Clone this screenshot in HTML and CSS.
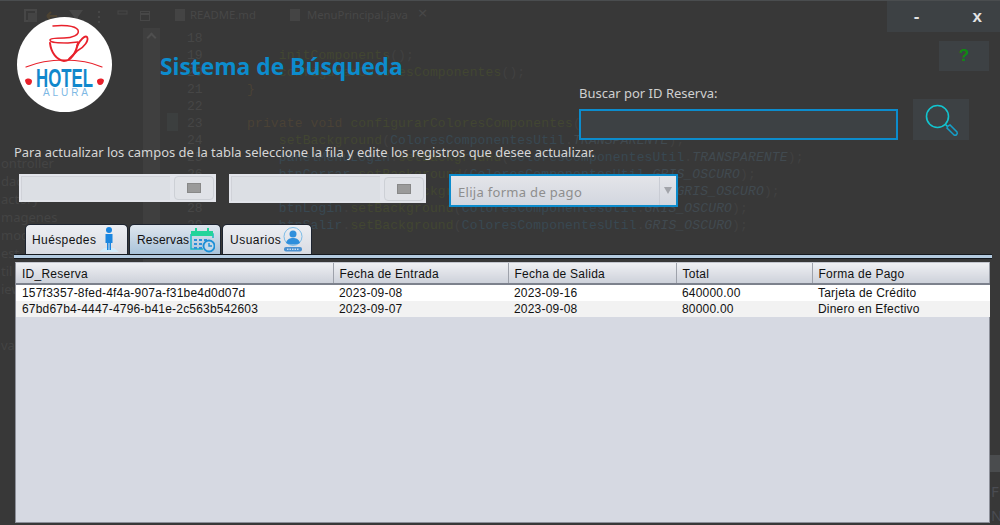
FILE: index.html
```html
<!DOCTYPE html>
<html lang="en">
<head>
    <meta charset="UTF-8">
    <title>Sistema de Búsqueda</title>
    <link rel="stylesheet" href="styles.css">
</head>
<body>
    <div class="window">
        <!-- the IDE that shows through the translucent window -->
        <div class="backdrop">
            <div class="ide-bar">
                <svg class="ide-icons" width="160" height="27" viewBox="0 0 160 27">
                    <rect x="25" y="9" width="11" height="11" fill="none" stroke="#474747" stroke-width="2"/>
                    <rect x="28" y="12" width="9" height="9" fill="#444"/>
                    <path d="M47 15h10M47 15l4-4M47 15l4 4" fill="none" stroke="#4d4332" stroke-width="2"/>
                    <path d="M69 9h14l-5 7v6h-4v-6z" fill="#474747"/>
                    <path d="M99 10v2M99 15v2M99 20v2" stroke="#474747" stroke-width="2"/>
                    <rect x="118" y="10" width="9" height="3" fill="none" stroke="#474747"/>
                    <rect x="140.500" y="10.500" width="9" height="9" fill="none" stroke="#474747"/>
                    <path d="M140 13h10" stroke="#474747" stroke-width="2"/>
                </svg>
                <span class="ide-file"></span>
                <span class="ide-tab">README.md</span>
                <span class="ide-file"></span>
                <span class="ide-tab ide-tab-open">MenuPrincipal.java <span class="ide-close">×</span></span>
            </div>
            <div class="ide-tree">
                <p>ontroller</p><p>dao</p><p>actory</p><p>magenes</p><p>model</p><p>est</p><p>til</p><p>iew</p>
                <p class="ide-tree-last">va</p>
            </div>
            <div class="ide-scroll"><span class="ide-scroll-up"></span></div>
            <div class="ide-gutter"></div>
            <pre class="ide-nums">18
19
20
21
22
23
24
25
26
27
28
29</pre>
            <pre class="ide-code">

    <i class="m">initComponents</i>();
    <i class="m">configurarColoresComponentes</i>();
<i class="k">}</i>

<i class="k">private void</i> <i class="m">configurarColoresComponentes</i>() {
    <i class="m">setBackground</i>(<i class="c">ColoresComponentesUtil</i>.<em>TRANSPARENTE</em>);
    <i class="c">panelMenuLogin</i>.<i class="m">setBackground</i>(<i class="c">ColoresComponentesUtil</i>.<em>TRANSPARENTE</em>);
    <i class="c">btnCerrar</i>.<i class="m">setBackground</i>(<i class="c">ColoresComponentesUtil</i>.<em>GRIS_OSCURO</em>);
    <i class="c">btnRegistrar</i>.<i class="m">setBackground</i>(<i class="c">ColoresComponentesUtil</i>.<em>GRIS_OSCURO</em>);
    <i class="c">btnLogin</i>.<i class="m">setBackground</i>(<i class="c">ColoresComponentesUtil</i>.<em>GRIS_OSCURO</em>);
    <i class="c">btnSalir</i>.<i class="m">setBackground</i>(<i class="c">ColoresComponentesUtil</i>.<em>GRIS_OSCURO</em>);</pre>
            <div class="ide-edge"></div>
            <div class="ide-side"><p>F</p><p>N</p></div>
        </div>

        <div class="win-buttons">
            <span class="win-btn">-</span>
            <span class="win-btn">x</span>
        </div>

        <div class="app">
            <div class="top">
                <div class="brand">
                    <svg class="logo" width="95" height="95" viewBox="0 0 95 95">
                        <circle cx="47.500" cy="47.500" r="47.500" fill="#fff"/>
                        <g fill="none" stroke="#e8212b" stroke-linecap="round">
                            <path d="M36 9c8-1 22-1 25 4 2 5-6 8-14 8-6 0-14 0-14 2 0 3 10 3 18 3l10-1" stroke-width="1.500"/>
                            <path d="M33 26c1 10 7 17 14 18 7 0 12-8 14-18" stroke-width="2"/>
                            <path d="M60 29c3-6 8-11 10-9 2 3-2 10-10 14l-8 8" stroke-width="1.800"/>
                            <path d="M9 50c12-5 25-7 38-7s27 2 38 7" stroke-width="1.200"/>
                        </g>
                        <path d="M8 63c3-3 7-1 7 1s-1 4-3 4-4-2-4-5zM87 63c-3-3-7-1-7 1s1 4 3 4 4-2 4-5z" fill="#e8212b"/>
                        <text class="logo-hotel" x="19" y="70" textLength="57" lengthAdjust="spacingAndGlyphs">HOTEL</text>
                        <text class="logo-alura" x="26" y="79" textLength="45">ALURA</text>
                    </svg>
                    <h1 class="title">Sistema de Búsqueda</h1>
                </div>
                <div class="search">
                    <label class="search-label">Buscar por ID Reserva:</label>
                    <div class="search-input"></div>
                </div>
                <div class="side">
                    <div class="help">?</div>
                    <div class="search-btn">
                        <svg width="36" height="36" viewBox="0 0 36 36" fill="none">
                            <circle cx="14.500" cy="14.500" r="11" stroke="#12c4cf" stroke-width="1.600"/>
                            <path d="M22.500 22.500l3 3" stroke="#12c4cf" stroke-width="1.600"/>
                            <path d="M25 24l2-1 7 7c1 2-1 4-3 3l-7-7z" stroke="#159fc9" stroke-width="1.500" fill="#3d4144"/>
                        </svg>
                    </div>
                </div>
            </div>

            <p class="hint">Para actualizar los campos de la tabla seleccione la fila y edite los registros que desee actualizar.</p>

            <div class="filters">
                <div class="date-box">
                    <div class="date-field"></div>
                    <div class="date-btn"><span class="cal-glyph"></span></div>
                </div>
                <div class="date-box">
                    <div class="date-field"></div>
                    <div class="date-btn"><span class="cal-glyph"></span></div>
                </div>
                <div class="combo">
                    <span class="combo-text">Elija forma de pago</span>
                    <span class="combo-arrow"></span>
                </div>
            </div>

            <div class="tabs">
                <div class="tab">
                    <span>Huéspedes</span>
                    <svg class="tab-person" width="22" height="27" viewBox="0 0 22 27">
                        <path d="M1 26l5-4h10l5 4z" fill="#d3ecfb"/>
                        <circle cx="11" cy="4" r="3" fill="#1a86e0"/>
                        <path d="M7.500 8h7v9h-1.500v7h-1.500v-7h-1v7h-1.500v-7h-1.500z" fill="#1a86e0"/>
                    </svg>
                </div>
                <div class="tab tab-active">
                    <span>Reservas</span>
                    <svg class="tab-cal" width="25" height="26" viewBox="0 0 25 26" fill="none">
                        <path d="M1 7h22v4M1 7v15h12" stroke="#18b6c4" stroke-width="1.500"/>
                        <rect x="1" y="4" width="22" height="5" fill="#22d49a"/>
                        <path d="M6 1v5M18 1v5" stroke="#22d49a" stroke-width="2"/>
                        <path d="M4 12h3v2h-3zM9 12h3v2h-3zM14 12h3v2h-3zM4 16h3v2h-3zM9 16h3v2h-3zM4 20h3v2h-3zM9 20h3v2h-3z" fill="#2b8fd8"/>
                        <circle cx="19" cy="19" r="5.500" fill="#c5d8e8" stroke="#1c8fd6" stroke-width="1.800"/>
                        <path d="M19 16v3h3" stroke="#1c8fd6" stroke-width="1.400"/>
                    </svg>
                </div>
                <div class="tab">
                    <span>Usuarios</span>
                    <svg width="20" height="25" viewBox="0 0 20 25" fill="none">
                        <circle cx="10" cy="9.500" r="9" stroke="#7dbde8"/>
                        <circle cx="10" cy="7" r="3.500" fill="#2f8fdc"/>
                        <path d="M3 16c1-4 4-5 7-5s6 1 7 5c-4 2-10 2-14 0z" fill="#2f8fdc"/>
                        <rect x="1" y="20" width="18" height="4.500" rx="2" fill="#4a90d0"/>
                        <path d="M4 22.200h12" stroke="#fff" stroke-dasharray="1.500 1"/>
                    </svg>
                </div>
            </div>
            <div class="tab-rule"></div>

            <div class="table-wrap">
                <table class="grid">
                    <thead>
                        <tr>
                            <th class="col-id">ID_Reserva</th>
                            <th class="col-in">Fecha de Entrada</th>
                            <th class="col-out">Fecha de Salida</th>
                            <th class="col-total">Total</th>
                            <th>Forma de Pago</th>
                        </tr>
                    </thead>
                    <tbody>
                        <tr>
                            <td>157f3357-8fed-4f4a-907a-f31be4d0d07d</td>
                            <td>2023-09-08</td>
                            <td>2023-09-16</td>
                            <td>640000.00</td>
                            <td>Tarjeta de Crédito</td>
                        </tr>
                        <tr class="row-alt">
                            <td>67bd67b4-4447-4796-b41e-2c563b542603</td>
                            <td>2023-09-07</td>
                            <td>2023-09-08</td>
                            <td>80000.00</td>
                            <td>Dinero en Efectivo</td>
                        </tr>
                    </tbody>
                </table>
            </div>
        </div>
    </div>
</body>
</html>
```

FILE: styles.css
```css
* {
    margin: 0;
    padding: 0;
    box-sizing: border-box;
}

body {
    background: #383838;
    overflow: hidden;
}

.window {
    position: relative;
    width: 1000px;
    height: 525px;
    overflow: hidden;
    background: #383838;
    border-top: 1px solid #4a4d4f;
    font-family: "Noto Sans", sans-serif;
}

/* ---- IDE behind the window ---- */
.backdrop {
    position: absolute;
    inset: 0;
    color: #434343;
}

.ide-bar {
    display: flex;
    align-items: center;
    height: 27px;
    font-size: 11.300px;
    color: #474747;
}

.ide-icons {
    flex: none;
}

.ide-file {
    flex: none;
    width: 10px;
    height: 12px;
    margin-left: 15px;
    background: #444;
}

.ide-tab {
    flex: none;
    width: 85px;
    margin-left: 5px;
}

.ide-file + .ide-tab-open {
    width: 150px;
    margin-left: 7px;
    white-space: nowrap;
}

.ide-close {
    font-size: 17px;
    line-height: 10px;
    margin-left: 7px;
}

.ide-tree {
    position: absolute;
    top: 153px;
    left: 1px;
    font-size: 13px;
    line-height: 18px;
    color: #444;
}

.ide-tree-last {
    margin-top: 38px;
}

.ide-scroll {
    position: absolute;
    top: 27px;
    left: 143px;
    width: 17px;
    height: 265px;
    background: #3f3f3f;
}

.ide-scroll-up {
    position: absolute;
    top: 6px;
    left: 5px;
    width: 7px;
    height: 7px;
    border-top: 2px solid #4f4f4f;
    border-left: 2px solid #4f4f4f;
    transform: rotate(45deg);
}

.ide-gutter {
    position: absolute;
    top: 112px;
    left: 167px;
    width: 11px;
    height: 18px;
    background: #3c3f3f;
}

.ide-nums,
.ide-code {
    position: absolute;
    top: 29px;
    font-family: "Liberation Mono", monospace;
    font-size: 13px;
    line-height: 17px;
}

.ide-nums {
    left: 187px;
    color: #464646;
}

.ide-code {
    left: 247px;
    letter-spacing: 0.15px;
    color: #414141;
}

.ide-code i {
    font-style: normal;
}

.ide-code em {
    color: #414a50;
}

.ide-code .m {
    color: #424632;
}

.ide-code .c {
    color: #384852;
}

.ide-code .k {
    color: #4a4236;
}

.ide-edge {
    position: absolute;
    top: 454px;
    right: 0;
    width: 10px;
    height: 17px;
    background: #4a4c4e;
}

.ide-side {
    position: absolute;
    top: 478px;
    left: 991px;
    font-size: 15px;
    line-height: 24px;
    color: #4a4c52;
}

/* ---- app ---- */
.win-buttons {
    position: absolute;
    top: 0;
    right: 0;
    display: flex;
    justify-content: flex-end;
    gap: 53px;
    width: 113px;
    height: 31px;
    padding-right: 18px;
    background: #3d4144;
    color: #e4e4e4;
    font-family: "Liberation Sans", sans-serif;
    font-weight: bold;
    font-size: 17px;
}

.win-btn {
    display: flex;
    align-items: center;
}

.app {
    position: relative;
}

.top {
    display: flex;
    height: 142px;
}

.brand {
    display: flex;
    flex: none;
    width: 579px;
    padding: 16px 0 0 17px;
}

.logo {
    flex: none;
}

.logo-hotel {
    font-family: "Liberation Sans", sans-serif;
    font-weight: bold;
    font-size: 26px;
    fill: #1188cc;
}

.logo-alura {
    font-family: "Liberation Sans", sans-serif;
    font-size: 10px;
    fill: #7db8e4;
}

.title {
    margin: 34px 0 0 48px;
    font-family: "Open Sans", sans-serif;
    font-size: 22.800px;
    font-weight: bold;
    line-height: 32px;
    color: #0c8ccd;
    white-space: nowrap;
}

.search {
    flex: none;
    width: 319px;
    padding-top: 83px;
}

.search-label {
    display: block;
    height: 25px;
    font-size: 13px;
    line-height: 18px;
    color: #d0d0d0;
}

.search-input {
    height: 31px;
    background: #3d4144;
    border: 2px solid #0c8ccd;
}

.side {
    padding: 40px 0 0 15px;
}

.help {
    width: 50px;
    height: 30px;
    margin-left: 26px;
    background: #3d4144;
    color: #0f8a12;
    font-family: "Liberation Sans", sans-serif;
    font-weight: bold;
    font-size: 17px;
    line-height: 30px;
    text-align: center;
}

.search-btn {
    display: flex;
    align-items: center;
    justify-content: center;
    width: 56px;
    height: 41px;
    margin-top: 28px;
    background: #3d4144;
}

.hint {
    padding-left: 14px;
    height: 31px;
    font-size: 12.950px;
    line-height: 18px;
    color: #d6d6d6;
    white-space: nowrap;
}

.filters {
    display: flex;
    height: 50px;
    padding-left: 19px;
}

.date-box {
    display: flex;
    align-items: center;
    width: 197px;
    height: 28px;
    margin-right: 13px;
    padding: 2px;
    background: #e2e4ea;
}

.date-box + .date-box {
    height: 29px;
    margin-right: 23px;
}

.date-field {
    flex: 1;
    height: 100%;
    background: #dcdfe4;
    border-top: 1px solid #d0d2d8;
    border-left: 1px solid #d0d2d8;
}

.date-btn {
    display: flex;
    align-items: center;
    justify-content: center;
    width: 40px;
    height: 24px;
    margin-left: 4px;
    background: #e0e2e7;
    border: 1px solid #cdd0d6;
    border-radius: 4px;
}

.cal-glyph {
    width: 14px;
    height: 10px;
    background: #9a9a9a;
    border: 1px solid #888;
}

.combo {
    display: flex;
    align-items: center;
    justify-content: space-between;
    width: 229px;
    height: 33px;
    padding: 2px 0 0 7px;
    background: linear-gradient(#e4e5e9, #d2d6df);
    border: 2px solid #0c8ccd;
}

.combo-text {
    font-size: 13px;
    color: #8e8e8e;
    letter-spacing: 0.3px;
}

.combo-arrow {
    display: flex;
    align-items: center;
    justify-content: center;
    width: 17px;
    height: 28px;
    margin-top: -2px;
    border-left: 1px solid #c9ccd4;
}

.combo-arrow::after {
    content: "";
    border-top: 7px solid #a2a4aa;
    border-left: 4px solid transparent;
    border-right: 4px solid transparent;
}

.tabs {
    display: flex;
    gap: 1px;
    height: 30px;
    padding-left: 25px;
}

.tab {
    display: flex;
    align-items: center;
    justify-content: space-between;
    width: 103px;
    height: 30px;
    padding: 0 4px 0 6px;
    background: linear-gradient(#eceef2, #d9dce3);
    border: 1px solid #1d2430;
    border-bottom: 0;
    border-radius: 5px 5px 0 0;
    font-family: "Liberation Sans", sans-serif;
    font-size: 12px;
    letter-spacing: 0.4px;
    color: #111;
}

.tab-person {
    margin-right: 3px;
}

.tab-active {
    width: 92px;
    background: linear-gradient(#dfe6ee, #a9c3da);
    padding: 0 5px 0 7px;
    letter-spacing: 0.2px;
}

.tab-cal {
    flex: none;
}

.tab:last-child {
    width: 90px;
    padding: 0 8px 0 7px;
    letter-spacing: 0.5px;
}

.tab-rule {
    height: 5px;
    margin-left: 14px;
    width: 978px;
    background: #b4cbe0;
    border-top: 1px solid #15191f;
    border-bottom: 1px solid #15191f;
}

.table-wrap {
    height: 261px;
    margin: 3px 10px 0 15px;
    background: #d6d9e2;
    border: 1px solid #8c8f99;
    border-top-color: #c4c7cf;
}

.grid {
    width: 974px;
    table-layout: fixed;
    border-collapse: collapse;
    font-family: "Liberation Sans", sans-serif;
    font-size: 12px;
    letter-spacing: 0.2px;
    color: #111;
}

.grid th {
    height: 21px;
    padding: 1px 0 0 6px;
    background: linear-gradient(#eff0f3, #cdd1da);
    border-right: 1px solid #9ea2ab;
    border-bottom: 2px solid #7c818c;
    font-weight: normal;
    line-height: 14px;
    text-align: left;
    letter-spacing: 0.25px;
}

.grid td {
    height: 16px;
    padding-left: 6px;
    background: #fff;
    line-height: 16px;
}

.row-alt td {
    background: #f2f2f2;
}

.col-id {
    width: 317px;
}

.col-in {
    width: 175px;
}

.col-out {
    width: 168px;
}

.col-total {
    width: 136px;
}
```
